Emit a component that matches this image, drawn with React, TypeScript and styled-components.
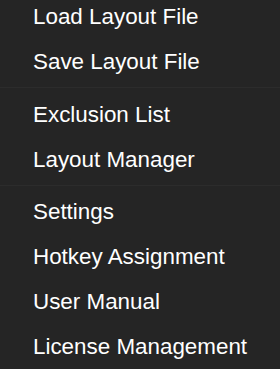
import React from 'react';
import styled, { createGlobalStyle } from 'styled-components';

// 메뉴 그룹 데이터
const groups: string[][] = [
  ['Load Layout File', 'Save Layout File'],
  ['Exclusion List', 'Layout Manager'],
  ['Settings', 'Hotkey Assignment', 'User Manual', 'License Management'],
];

const GlobalStyle = createGlobalStyle`
  html, body {
    margin: 0;
    padding: 0;
    background: #252525;
    overflow: hidden;
  }
`;

const App: React.FC = () => {
  return (
    <>
      <GlobalStyle />
      <Menu>
        {groups.map((items, gi) => (
          <React.Fragment key={gi}>
            {gi > 0 && <Divider />}
            {items.map((label) => (
              <Item key={label}>{label}</Item>
            ))}
          </React.Fragment>
        ))}
      </Menu>
    </>
  );
};

const Menu = styled.div`
  width: 280px;
  height: 375px;
  margin-top: -6px;
  background: #252525;
  display: flex;
  flex-direction: column;
  font-family: 'Liberation Sans', Arial, sans-serif;
`;

const Item = styled.div`
  height: 45px;
  line-height: 45px;
  padding-left: 33px;
  font-size: 22.4px;
  color: #ffffff;
  white-space: nowrap;
`;

const Divider = styled.div`
  height: 2px;
  margin: 3px 0 4px;
  background: #2c2c2c;
`;

export default App;
